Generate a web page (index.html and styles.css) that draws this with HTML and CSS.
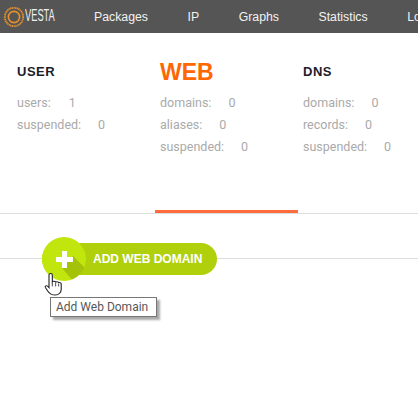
FILE: index.html
```html
<!DOCTYPE html>
<html lang="en">
<head>
  <meta charset="UTF-8">
  <title>Vesta - WEB</title>
  <link rel="stylesheet" href="styles.css">
</head>
<body>

  <!-- Top menu -->
  <header class="top-bar">
    <a class="logo" href="#">
      <svg class="logo-ring" width="22" height="22" viewBox="0 0 22 22">
        <circle cx="11" cy="11" r="9.200" fill="none" stroke="#e8912d" stroke-width="1.800" stroke-dasharray="1.200 .5"/>
        <circle cx="11" cy="11" r="5.600" fill="none" stroke="#e8912d" stroke-width="1.600"/>
      </svg>
      <span class="logo-text">VESTA</span>
    </a>
    <nav class="top-nav">
      <a href="#">Packages</a>
      <a href="#">IP</a>
      <a href="#">Graphs</a>
      <a href="#">Statistics</a>
      <a href="#">Log</a>
    </nav>
  </header>

  <!-- Stat tabs -->
  <section class="tabs">
    <div class="tab">
      <h2>USER</h2>
      <ul>
        <li><span>users:</span><b class="users-val">1</b></li>
        <li><span>suspended:</span><b>0</b></li>
      </ul>
    </div>
    <div class="tab active">
      <h2>WEB</h2>
      <ul>
        <li><span>domains:</span><b>0</b></li>
        <li><span>aliases:</span><b>0</b></li>
        <li><span>suspended:</span><b>0</b></li>
      </ul>
    </div>
    <div class="tab">
      <h2>DNS</h2>
      <ul>
        <li><span>domains:</span><b>0</b></li>
        <li><span>records:</span><b>0</b></li>
        <li><span>suspended:</span><b>0</b></li>
      </ul>
    </div>
  </section>

  <!-- Add button -->
  <section class="actions">
    <a class="add-btn" href="#">
      <span class="add-circle">
        <svg width="44" height="44" viewBox="0 0 44 44">
          <path d="M31 19l14 14v11H31L20 31z" fill="#a5c20a"/>
          <path d="M20 14h5v6h6v5h-6v6h-5v-6h-6v-5h6z" fill="#fff"/>
        </svg>
      </span>
      <span class="add-label">ADD WEB DOMAIN</span>
    </a>
    <svg class="cursor" width="20" height="25" viewBox="0 0 18 26" preserveAspectRatio="none">
      <path d="M6 1.500c1 0 1.500.7 1.500 1.700v7c.5-.9 2.500-.9 3 .3.700-.7 2.300-.5 2.700.7.800-.5 2.300-.1 2.300 1.300v5.500c0 3-2 6-5.500 6-3.500 0-5-1.500-6.500-4l-2.300-4c-.6-1.300 1-2.400 2.100-1.200l1.200 1.400V3.200c0-1 .5-1.700 1.500-1.700z" fill="#fff" stroke="#222" stroke-width="1"/>
      <path d="M7.500 11v4M10.500 11.500V15M13.200 12.500V15" fill="none" stroke="#222" stroke-width=".8"/>
    </svg>
    <div class="tooltip">Add Web Domain</div>
  </section>

</body>
</html>
```

FILE: styles.css
```css
/* Basic Reset */
* {
  margin: 0;
  padding: 0;
  box-sizing: border-box;
}

body {
  font-family: "Liberation Sans", Arial, sans-serif;
  background-color: #fff;
  overflow: hidden;
  width: 418px;
  height: 420px;
}

a {
  text-decoration: none;
}

/* Top bar */
.top-bar {
  display: flex;
  align-items: center;
  height: 33px;
  background-color: #555;
  white-space: nowrap;
  overflow: hidden;
}

.logo {
  display: flex;
  align-items: center;
  width: 94px;
  padding-left: 3px;
  flex-shrink: 0;
}

.logo-text {
  font-size: 16px;
  line-height: 16px;
  color: #eee;
  display: inline-block;
  width: 30px;
  margin-top: -1px;
  transform: scaleX(.58);
  transform-origin: left center;
}

.top-nav {
  display: flex;
}

.top-nav a {
  color: #f2f2f2;
  font-size: 12.300px;
  margin-right: 39.500px;
}

/* Tabs */
.tabs {
  display: flex;
  height: 181px;
  padding-left: 12px;
  border-bottom: 1px solid #ddd;
  overflow: hidden;
}

.tab {
  position: relative;
  width: 143px;
  flex-shrink: 0;
  padding: 31px 0 0 5px;
}

.tab h2 {
  height: 20px;
  font-size: 13px;
  line-height: 16px;
  font-weight: bold;
  letter-spacing: .5px;
  color: #1c1c2b;
  margin: 0 0 8px;
}

.tab ul {
  list-style: none;
  font-family: Roboto, sans-serif;
  font-size: 12.500px;
  line-height: 22px;
  color: #aaa;
}

.tab li b {
  font-weight: normal;
  margin-left: 17px;
}

.tab li .users-val {
  margin-left: 18px;
}

.tab.active {
  border-bottom: 3px solid #ff6b3d;
}

.tab.active h2 {
  font-size: 23px;
  line-height: 30px;
  letter-spacing: 0;
  color: #ff6701;
  margin-top: -7px;
  height: 27px;
  margin-bottom: 8px;
}

/* Add button */
.actions {
  position: relative;
  padding: 23px 0 0 42px;
}

.actions::before {
  content: "";
  position: absolute;
  left: 0;
  right: 0;
  top: 44px;
  border-top: 1px solid #ddd;
}

.add-btn {
  position: relative;
  display: flex;
  align-items: center;
  width: 175px;
  height: 32px;
  margin-top: 6px;
  border-radius: 16px;
  background-color: #afd00a;
}

.add-circle {
  width: 44px;
  height: 44px;
  border-radius: 50%;
  background-color: #c0e60d;
  flex-shrink: 0;
  overflow: hidden;
}

.add-circle svg {
  display: block;
}

.add-label {
  margin-left: 7px;
  font-size: 12px;
  font-weight: bold;
  color: #fff;
  white-space: nowrap;
}

.cursor {
  position: absolute;
  left: 44px;
  top: 58px;
}

.tooltip {
  position: absolute;
  left: 50px;
  top: 83px;
  height: 20px;
  width: 107px;
  border: 1px solid #767676;
  background-color: #fff;
  box-shadow: 3px 3px 2px #aaa;
  font-family: Roboto, sans-serif;
  font-size: 12px;
  line-height: 18px;
  padding-left: 5px;
  color: #575757;
  white-space: nowrap;
}
```
